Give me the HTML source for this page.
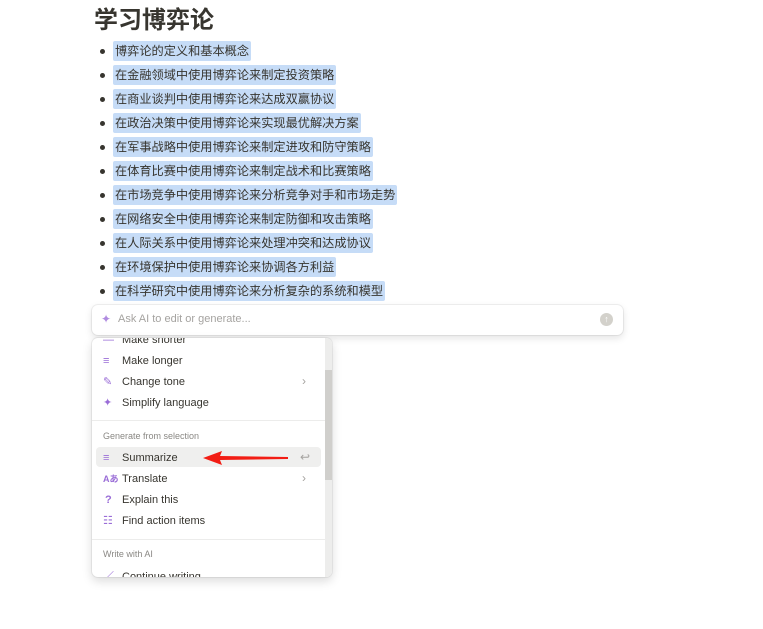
<!DOCTYPE html>
<html><head><meta charset="utf-8"><style>
*{margin:0;padding:0;box-sizing:border-box}
body{width:763px;height:629px;background:#fff;position:relative;overflow:hidden;font-family:"Liberation Sans","Noto Sans CJK SC",sans-serif;color:#37352f}
h1{position:absolute;left:94px;top:6px;font-size:24px;font-weight:bold;color:#37352f;line-height:30px}
.li{position:absolute;left:100px;font-size:12.2px;line-height:20px;height:20px}
.li::before{content:"";position:absolute;left:0;top:8px;width:5px;height:5px;border-radius:50%;background:#37352f}
.li span{position:absolute;left:13px;white-space:nowrap;background:#c6dcf7;padding:0 2px;border-radius:2px;color:#37352f}
.ask{position:absolute;left:92px;top:305px;width:531px;height:30px;background:#fff;border-radius:6px;box-shadow:0 0 0 1px rgba(15,15,15,.06),0 3px 8px rgba(15,15,15,.12)}
.ask .ph{position:absolute;left:26px;top:8px;font-size:11px;color:#a5a3a0}
.menu{position:absolute;left:92px;top:338px;width:240px;height:239px;background:#fff;border-radius:6px;box-shadow:0 0 0 1px rgba(15,15,15,.06),0 4px 10px rgba(15,15,15,.15);overflow:hidden}
.it{position:absolute;left:30px;font-size:11px;color:#37352f;line-height:14px}
.ic{position:absolute;left:11px;font-size:11px;color:#9a6dd7;line-height:14px}
.hd{position:absolute;left:11px;font-size:9px;color:#8a8884}
.div{position:absolute;left:0;width:233px;height:1px;background:#ececeb}
.chev{position:absolute;left:210px;font-size:12px;color:#a5a3a0}
</style></head><body>
<h1>学习博弈论</h1>
<div class="li" style="top:41px"><span>博弈论的定义和基本概念</span></div>
<div class="li" style="top:65px"><span>在金融领域中使用博弈论来制定投资策略</span></div>
<div class="li" style="top:89px"><span>在商业谈判中使用博弈论来达成双赢协议</span></div>
<div class="li" style="top:113px"><span>在政治决策中使用博弈论来实现最优解决方案</span></div>
<div class="li" style="top:137px"><span>在军事战略中使用博弈论来制定进攻和防守策略</span></div>
<div class="li" style="top:161px"><span>在体育比赛中使用博弈论来制定战术和比赛策略</span></div>
<div class="li" style="top:185px"><span>在市场竞争中使用博弈论来分析竞争对手和市场走势</span></div>
<div class="li" style="top:209px"><span>在网络安全中使用博弈论来制定防御和攻击策略</span></div>
<div class="li" style="top:233px"><span>在人际关系中使用博弈论来处理冲突和达成协议</span></div>
<div class="li" style="top:257px"><span>在环境保护中使用博弈论来协调各方利益</span></div>
<div class="li" style="top:281px"><span>在科学研究中使用博弈论来分析复杂的系统和模型</span></div>
<div class="ask">
<span style="position:absolute;left:9px;top:7px;font-size:12px;color:#b08be0">✦</span>
<span class="ph">Ask AI to edit or generate...</span>
<span style="position:absolute;right:10px;top:8px;width:13px;height:13px;border-radius:50%;background:#d3d1cb;color:#fff;font-size:9px;text-align:center;line-height:13px">↑</span>
</div>
<div class="menu">
<div style="position:absolute;left:233px;top:0;width:7px;height:239px;background:#ededec"></div>
<div style="position:absolute;left:233px;top:32px;width:7px;height:110px;background:#d0cfcc"></div>
<div class="ic" style="top:-5px">—</div><div class="it" style="top:-5px">Make shorter</div>
<div class="ic" style="top:16px">≡</div><div class="it" style="top:16px">Make longer</div>
<div class="ic" style="top:37px">✎</div><div class="it" style="top:37px">Change tone</div><div class="chev" style="top:36px">›</div>
<div class="ic" style="top:58px">✦</div><div class="it" style="top:58px">Simplify language</div>
<div class="div" style="top:82px"></div>
<div class="hd" style="top:93px">Generate from selection</div>
<div style="position:absolute;left:4px;top:109px;width:225px;height:20px;background:#efefee;border-radius:4px"></div>
<div class="ic" style="top:113px">≡</div><div class="it" style="top:113px">Summarize</div>
<div style="position:absolute;left:208px;top:112px;font-size:12px;color:#a5a3a0">↩</div>
<div class="ic" style="top:134px;font-size:9px;font-weight:bold">Aあ</div><div class="it" style="top:134px">Translate</div><div class="chev" style="top:133px">›</div>
<div class="ic" style="top:155px;left:13px;font-weight:bold">?</div><div class="it" style="top:155px">Explain this</div>
<div class="ic" style="top:176px">☷</div><div class="it" style="top:176px">Find action items</div>
<div class="div" style="top:201px"></div>
<div class="hd" style="top:211px">Write with AI</div>
<div class="ic" style="top:232px">／</div><div class="it" style="top:232px">Continue writing</div>
</div>
<svg style="position:absolute;left:200px;top:449px" width="92" height="18"><polygon points="3,9 22,2 20,7 88,8 88,10 20,11 22,16" fill="#f21d14"/></svg>
</body></html>
